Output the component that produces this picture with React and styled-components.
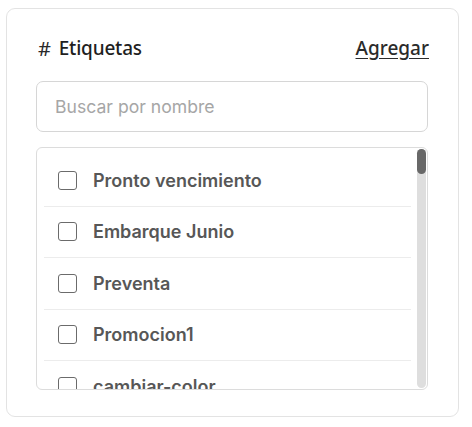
import React from "react"
import styled, { createGlobalStyle } from "styled-components"

const Global = createGlobalStyle`
  body {
    margin: 0;
    background: #ffffff;
    font-family: "Noto Sans", "Liberation Sans", sans-serif;
  }
`

const Card = styled.div`
  box-sizing: border-box;
  margin: 8px 0 0 6px;
  width: 453px;
  height: 409px;
  border: 1px solid #e3e3e3;
  border-radius: 9px;
  padding: 25px 29px 0 29px;
  display: flex;
  flex-direction: column;
`

const Header = styled.div`
  display: flex;
  justify-content: space-between;
  align-items: center;
  height: 28px;
  margin-bottom: 19px;
`

const Title = styled.div`
  display: flex;
  align-items: center;
  gap: 8px;
  font-family: "Noto Sans", sans-serif;
  font-size: 19px;
  font-weight: 500;
  color: #1f1f1f;
  padding-left: 2px;
  letter-spacing: -0.2px;
`

const Hash = styled.span`
  font-size: 20px;
  font-weight: 400;
  color: #2a2a2a;
`

const AddLink = styled.a`
  font-family: "Noto Sans", sans-serif;
  font-size: 19px;
  font-weight: 500;
  color: #2b2b2b;
  text-decoration: underline;
  text-underline-offset: 3px;
  cursor: pointer;
`

const Search = styled.input`
  box-sizing: border-box;
  width: 392px;
  height: 51px;
  border: 1px solid #d6d6d6;
  border-radius: 7px;
  padding: 0 18px;
  font-family: "Inter", sans-serif;
  font-size: 17.6px;
  outline: none;
  margin-bottom: 15px;
  &::placeholder {
    color: #a6a6a6;
  }
`

const ListBox = styled.div`
  box-sizing: border-box;
  width: 392px;
  height: 243px;
  border: 1px solid #dcdcdc;
  border-radius: 6px;
  display: flex;
  overflow: hidden;
`

const Items = styled.div`
  flex: 1;
  padding: 7px 6px 0 7px;
  overflow: hidden;
`

const Row = styled.label`
  display: flex;
  align-items: center;
  gap: 16px;
  height: 50.5px;
  padding-left: 14px;
  border-bottom: 1px solid #ececec;
  font-family: "Inter", sans-serif;
  font-size: 18px;
  font-weight: 600;
  color: #575757;
  &:last-child {
    border-bottom: none;
  }
`

const Box = styled.span`
  box-sizing: border-box;
  width: 19px;
  height: 19px;
  border: 1.5px solid #6b6b6b;
  border-radius: 3px;
  flex-shrink: 0;
`

const Track = styled.div`
  width: 9px;
  margin: 1px 1px 1px 0;
  background: #dedede;
  border-radius: 5px;
  display: flex;
  flex-direction: column;
`

const Thumb = styled.div`
  height: 25px;
  background: #686868;
  border-radius: 5px;
`

const tags = ["Pronto vencimiento", "Embarque Junio", "Preventa", "Promocion1", "cambiar-color"]

export default function App() {
  return (
    <>
      <Global />
      <Card>
        <Header>
          <Title>
            <Hash>#</Hash>
            Etiquetas
          </Title>
          <AddLink>Agregar</AddLink>
        </Header>
        <Search placeholder="Buscar por nombre" />
        <ListBox>
          <Items>
            {tags.map(t => (
              <Row key={t}>
                <Box />
                {t}
              </Row>
            ))}
          </Items>
          <Track>
            <Thumb />
          </Track>
        </ListBox>
      </Card>
    </>
  )
}
